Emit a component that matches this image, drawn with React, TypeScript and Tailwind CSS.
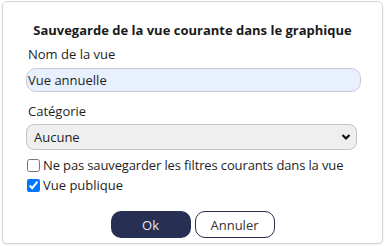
import { useState } from "react";

export default function App() {
  const [name, setName] = useState("Vue annuelle");
  const [category, setCategory] = useState("Aucune");
  const [noFilters, setNoFilters] = useState(false);
  const [isPublic, setIsPublic] = useState(true);

  return (
    <div className="h-[246px] w-[385px] bg-white pl-[2px] pt-[1px] font-['Open_Sans',sans-serif] text-[13px] leading-[18px] text-[#1e1e1e]">
      <div className="flex h-[243px] w-[381px] flex-col rounded-[5px] border border-[#d6d6d6] bg-white px-[23px] pt-[19px] shadow-[0_1px_2px_rgba(0,0,0,0.08)]">
        {/* Title */}
        <h2 className="whitespace-nowrap text-center font-bold text-[#1a1a1a]">
          Sauvegarde de la vue courante dans le graphique
        </h2>

        {/* View name */}
        <label className="mt-[6px] block pl-[2px]">Nom de la vue</label>
        <input
          value={name}
          onChange={(e) => setName(e.target.value)}
          className="mt-[5px] h-[24px] w-[335px] rounded-[10px] border border-[#c5cbd3] bg-[#e8f0fe] px-[1px] text-[13px] text-[#1e1e1e] outline-none"
        />

        {/* Category */}
        <label className="mt-[10px] block pl-[2px]">Catégorie</label>
        <div className="relative mt-[4px] w-[331px]">
          <select
            value={category}
            onChange={(e) => setCategory(e.target.value)}
            className="block h-[26px] w-full appearance-none rounded-[8px] border border-[#c4c4c4] bg-[#efefef] pl-[7px] text-[13px] text-[#1e1e1e] outline-none"
          >
            <option>Aucune</option>
          </select>
          <svg
            className="pointer-events-none absolute right-[6px] top-[9px]"
            width="10"
            height="8"
            viewBox="0 0 10 8"
          >
            <path d="M1.5 2 L5 5.5 L8.5 2" fill="none" stroke="#111" strokeWidth="2.2" />
          </svg>
        </div>

        {/* Options */}
        <label className="mt-[6px] flex items-center gap-[3px] whitespace-nowrap leading-[19px] tracking-[-0.13px]">
          <input
            type="checkbox"
            checked={noFilters}
            onChange={(e) => setNoFilters(e.target.checked)}
            className="ml-[1px] h-[13px] w-[13px]"
          />
          Ne pas sauvegarder les filtres courants dans la vue
        </label>
        <label className="mt-[1px] flex items-center gap-[3px] leading-[19px]">
          <input
            type="checkbox"
            checked={isPublic}
            onChange={(e) => setIsPublic(e.target.checked)}
            className="ml-[1px] h-[13px] w-[13px]"
          />
          Vue publique
        </label>

        {/* Actions */}
        <div className="mt-[16px] flex justify-center gap-[4px]">
          <button className="h-[27px] w-[80px] rounded-[10px] bg-[#272f52] text-[13px] text-[#e8e8ee]">
            Ok
          </button>
          <button className="h-[27px] w-[80px] rounded-[10px] border border-[#272f52] bg-white text-[13px] text-[#333]">
            Annuler
          </button>
        </div>
      </div>
    </div>
  );
}
